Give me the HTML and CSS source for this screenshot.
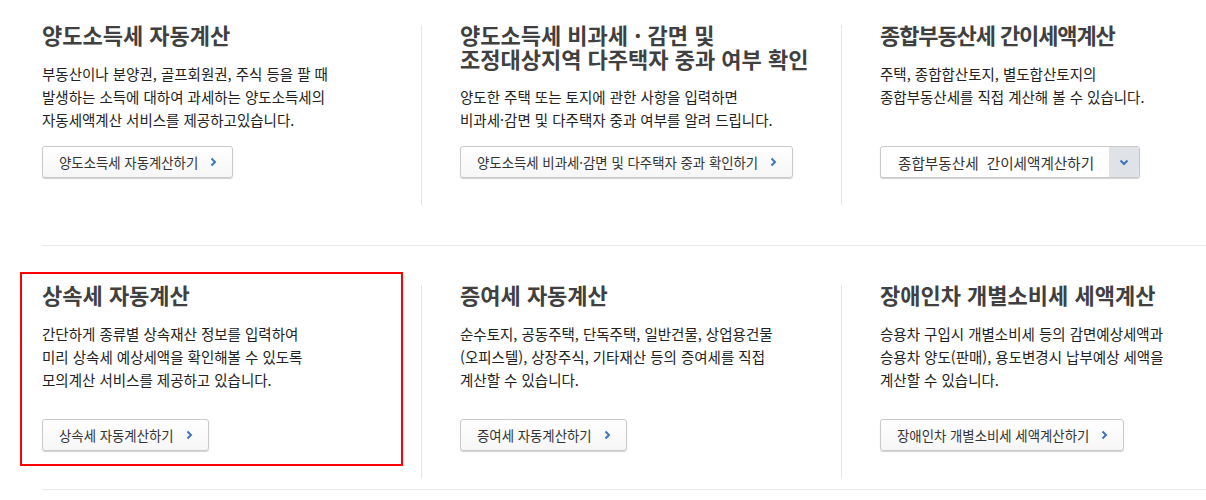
FILE: index.html
```html
<!DOCTYPE html>
<html lang="ko">
<head>
<meta charset="utf-8">
<title>세금 모의계산</title>
<link rel="stylesheet" href="styles.css">
</head>
<body>
<div class="page">
  <section class="row row-top">
    <article class="card">
      <h2 class="card-title">양도소득세 자동계산</h2>
      <p class="card-desc">부동산이나 분양권, 골프회원권, 주식 등을 팔 때<br>발생하는 소득에 대하여 과세하는 양도소득세의<br>자동세액계산 서비스를 제공하고있습니다.</p>
      <a class="btn" href="#">양도소득세 자동계산하기<svg class="chev" width="7" height="10" viewBox="0 0 7 10"><polyline points="1.5,1.5 5,5 1.5,8.5" fill="none" stroke="#3f74bd" stroke-width="2"/></svg></a>
    </article>
    <article class="card card-div">
      <h2 class="card-title"><span class="title-line">양도소득세 비과세 · 감면 및</span><span class="title-line">조정대상지역 다주택자 중과 여부 확인</span></h2>
      <p class="card-desc">양도한 주택 또는 토지에 관한 사항을 입력하면<br>비과세·감면 및 다주택자 중과 여부를 알려 드립니다.</p>
      <a class="btn" href="#">양도소득세 비과세·감면 및 다주택자 중과 확인하기<svg class="chev" width="7" height="10" viewBox="0 0 7 10"><polyline points="1.5,1.5 5,5 1.5,8.5" fill="none" stroke="#3f74bd" stroke-width="2"/></svg></a>
    </article>
    <article class="card card-div">
      <h2 class="card-title title-tight">종합부동산세 간이세액계산</h2>
      <p class="card-desc">주택, 종합합산토지, 별도합산토지의<br>종합부동산세를 직접 계산해 볼 수 있습니다.</p>
      <a class="select" href="#"><span class="select-label">종합부동산세&nbsp; 간이세액계산하기</span><span class="select-arrow"><svg width="10" height="7" viewBox="0 0 10 7"><polyline points="1.5,1.5 5,5 8.5,1.5" fill="none" stroke="#3f74bd" stroke-width="2"/></svg></span></a>
    </article>
  </section>
  <section class="row row-bottom">
    <article class="card card-marked">
      <h2 class="card-title">상속세 자동계산</h2>
      <p class="card-desc">간단하게 종류별 상속재산 정보를 입력하여<br>미리 상속세 예상세액을 확인해볼 수 있도록<br>모의계산 서비스를 제공하고 있습니다.</p>
      <a class="btn" href="#">상속세 자동계산하기<svg class="chev" width="7" height="10" viewBox="0 0 7 10"><polyline points="1.5,1.5 5,5 1.5,8.5" fill="none" stroke="#3f74bd" stroke-width="2"/></svg></a>
      <span class="highlight"></span>
    </article>
    <article class="card card-div">
      <h2 class="card-title">증여세 자동계산</h2>
      <p class="card-desc">순수토지, 공동주택, 단독주택, 일반건물, 상업용건물<br>(오피스텔), 상장주식, 기타재산 등의 증여세를 직접<br>계산할 수 있습니다.</p>
      <a class="btn" href="#">증여세 자동계산하기<svg class="chev" width="7" height="10" viewBox="0 0 7 10"><polyline points="1.5,1.5 5,5 1.5,8.5" fill="none" stroke="#3f74bd" stroke-width="2"/></svg></a>
    </article>
    <article class="card card-div">
      <h2 class="card-title">장애인차 개별소비세 세액계산</h2>
      <p class="card-desc">승용차 구입시 개별소비세 등의 감면예상세액과<br>승용차 양도(판매), 용도변경시 납부예상 세액을<br>계산할 수 있습니다.</p>
      <a class="btn" href="#">장애인차 개별소비세 세액계산하기<svg class="chev" width="7" height="10" viewBox="0 0 7 10"><polyline points="1.5,1.5 5,5 1.5,8.5" fill="none" stroke="#3f74bd" stroke-width="2"/></svg></a>
    </article>
  </section>
</div>
</body>
</html>
```

FILE: styles.css
```css
* { box-sizing: border-box; }

html, body {
  margin: 0;
  padding: 0;
  background: #ffffff;
}

body {
  font-family: "Noto Sans CJK KR", "Noto Sans", sans-serif;
  color: #222;
}

.page {
  padding-left: 42px;
}

.row {
  display: grid;
  grid-template-columns: 379px 420px 1fr;
  border-bottom: 1px solid #e8e8e8;
}

.row-top {
  margin-top: 25px;
  padding-bottom: 40px;
}

.row-top .card { height: 180px; }

.row-bottom {
  padding-top: 39px;
  padding-bottom: 11px;
}

.row-bottom .card { height: 193px; }

.card {
  position: relative;
  display: flex;
  flex-direction: column;
  align-items: flex-start;
  padding-bottom: 27px;
}

.card-div {
  border-left: 1px solid #e6e6e6;
  padding-left: 38px;
}

.card-title {
  margin: -3px 0 0;
  font-size: 22px;
  line-height: 25px;
  font-weight: 700;
  color: #404040;
  letter-spacing: 0;
}

.title-line {
  display: block;
  height: 24px;
  line-height: 24px;
}

.title-tight { letter-spacing: -1.1px; }

.card-desc {
  margin: 15px 0 0;
  font-size: 14.5px;
  line-height: 23px;
  color: #222;
}

.btn {
  margin-top: auto;
  display: inline-flex;
  align-items: center;
  height: 32px;
  padding: 0 15px 0 16px;
  border: 1px solid #c9c9c9;
  border-radius: 3px;
  background: linear-gradient(#ffffff, #f6f6f6);
  box-shadow: 0 1px 1px rgba(0, 0, 0, 0.18);
  font-size: 13.4px;
  color: #333;
  text-decoration: none;
  white-space: nowrap;
}

.chev {
  margin-left: 12px;
  display: block;
}

.select {
  margin-top: auto;
  display: inline-flex;
  align-items: stretch;
  height: 32px;
  border: 1px solid #c9c9c9;
  border-radius: 3px;
  background: #fff;
  box-shadow: 0 1px 1px rgba(0, 0, 0, 0.18);
  text-decoration: none;
  overflow: hidden;
}

.select-label {
  display: flex;
  align-items: center;
  padding: 0 15px 0 17px;
  font-size: 14.6px;
  color: #333;
  white-space: nowrap;
}

.select-arrow {
  width: 30px;
  display: flex;
  align-items: center;
  justify-content: center;
  background: #dfe3e8;
}

.highlight {
  position: absolute;
  left: -22px;
  top: -13px;
  width: 383px;
  height: 194px;
  border: 2px solid #ff0000;
  pointer-events: none;
}
```
